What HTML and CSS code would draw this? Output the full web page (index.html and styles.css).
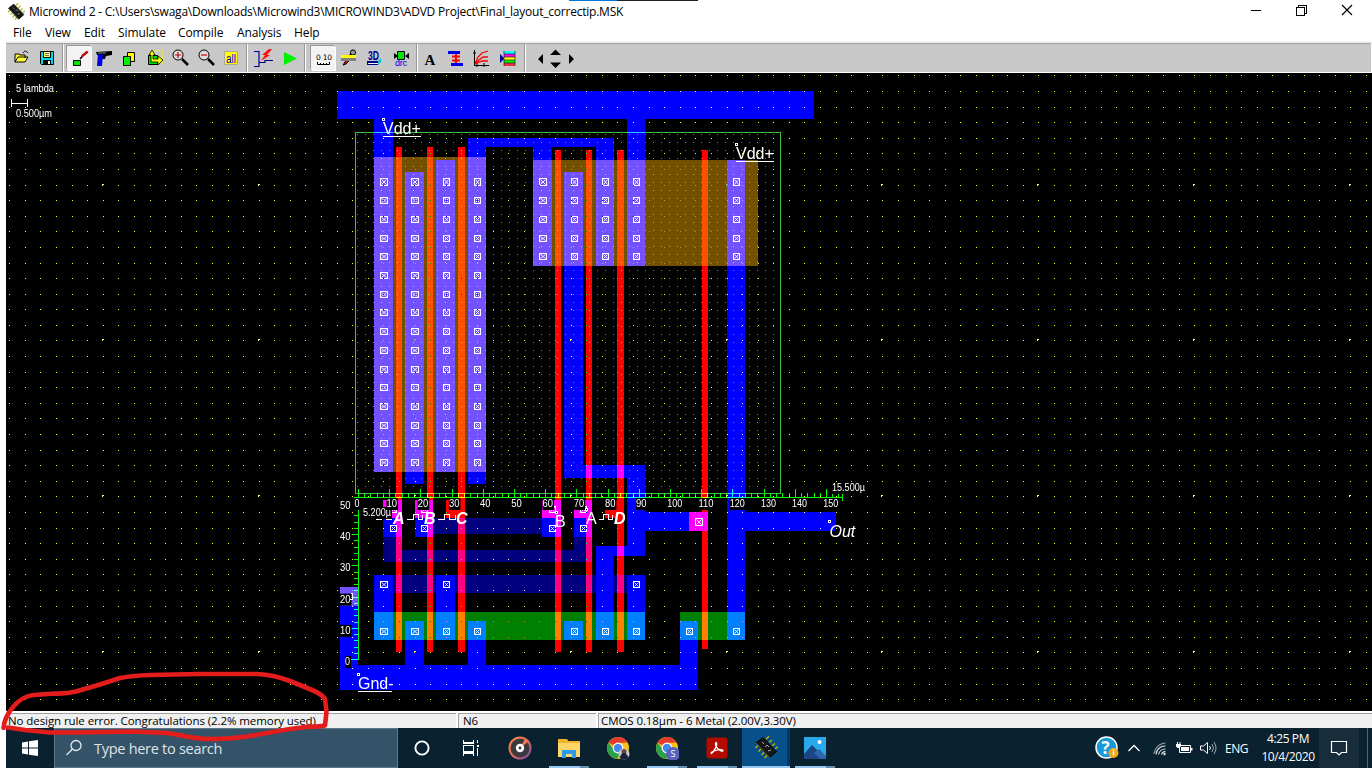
FILE: index.html
```html
<!DOCTYPE html>
<html lang="en">
<head>
<meta charset="utf-8">
<title>Microwind 2</title>
<link rel="stylesheet" href="styles.css">
</head>
<body>
<svg class="defs" width="0" height="0">
  <defs>
    <symbol id="chip" viewBox="0 0 24 24">
      <path d="M4.500 9l-3 3M7.500 12.500l-3 3M10.500 16l-3 3M13.500 19l-3 3M12 3l3-2.500M15 6.500l3-2.500M18 10l3-2.500M21 13l3-2.500" stroke="#b4b400" stroke-width="1.500"/>
      <path d="M2 7L9 1.500 22.500 15.500 15.500 21.500z" fill="#161616" stroke="#000"/>
      <path d="M2 7L15.500 21.500" stroke="#66663a" stroke-width="1"/>
      <path d="M8 6l2 2M11 11l2-2 2 2M14 15l3-1" stroke="#aaa" stroke-width="1" fill="none"/>
    </symbol>
    <symbol id="chrome" viewBox="0 0 24 24">
      <circle cx="12" cy="12" r="11" fill="#fbc116"/>
      <path d="M12 12L2.500 6.500A11 11 0 0 1 21.500 6.500L12 7z" fill="#e33b2e"/>
      <path d="M2.500 6.500A11 11 0 0 0 11 23L16 14 12 12 8 14z" fill="#2ca14c"/>
      <circle cx="12" cy="12" r="5.400" fill="#fff"/><circle cx="12" cy="12" r="4.200" fill="#4688f1"/>
    </symbol>
  </defs>
</svg>
<div class="window">
  <header class="titlebar">
    <svg class="appicon" viewBox="0 0 24 24"><use href="#chip"/></svg>
    <span class="title">Microwind 2 - C:\Users\swaga\Downloads\Microwind3\MICROWIND3\ADVD Project\Final_layout_correctip.MSK</span>
    <svg class="controls" viewBox="0 0 110 20" fill="none" stroke="#000" shape-rendering="crispEdges">
      <path d="M1 8.500h10M46.500 5.500h8v8h-8zM48.500 5V3.500h8v8H55"/>
      <path d="M92 3l10 10M102 3l-10 10" shape-rendering="auto" stroke-width="1.200"/>
    </svg>
  </header>
  <nav class="menubar"><span class="m1">File</span><span class="m2">View</span><span class="m3">Edit</span><span class="m4">Simulate</span><span class="m5">Compile</span><span class="m6">Analysis</span><span class="m7">Help</span></nav>
  <div class="toolbar">
    <div class="group g1">
      <svg class="tool" viewBox="0 0 24 24"><path d="M6 16V8h4l1 1h5v3M6 16l3-5h10l-3 5z" fill="#ffff40" stroke="#000"/><path d="M14 7c2-3 3-2 5 0" fill="none" stroke="#000"/></svg>
      <svg class="tool" viewBox="0 0 24 24"><path d="M5.500 5.500h13v13h-12l-1-1z" fill="#00d8e8" stroke="#000"/><path d="M8.500 5.500h7v6h-7z" fill="#ffff60" stroke="#000"/><path d="M10 7.500h4M10 9.500h4" stroke="#777"/><path d="M8 14h8v4H8z" fill="#000"/><path d="M13 15h2v3h-2z" fill="#fff"/></svg>
    </div>
    <div class="group g2">
      <svg class="tool pressed" viewBox="0 0 24 24"><path d="M6.500 14.500h7v5h-7z" fill="#00e800" stroke="#000"/><path d="M14 12l1-3 5-4 1 1.500-5 4z" fill="#e80000" stroke="#900" stroke-width=".8"/><path d="M13 13l2-2" stroke="#000" stroke-width="1.500"/></svg>
      <svg class="tool" viewBox="0 0 24 24"><path d="M4 6l16-1v4l-6 1-1 3h-3l-1-3-4-1z" fill="#000"/><path d="M6 8l5 1-1 11H5z" fill="#0000e0"/><path d="M6 7h8" stroke="#888"/></svg>
      <svg class="tool" viewBox="0 0 24 24"><path d="M9.500 6.500h7v9h-7z" fill="#ffff00" stroke="#000"/><path d="M5.500 10.500h7v9h-7z" fill="#00f000" stroke="#000"/></svg>
      <svg class="tool" viewBox="0 0 24 24"><path d="M7.500 4.500h12v13" fill="none" stroke="#ff0" stroke-dasharray="1 1"/><path d="M5.500 9.500h9v9h-9z" fill="#00dc00" stroke="#000"/><path d="M6 9l3-5 3 5h-2v4h5v-3l5 4-5 5v-3H8V9z" fill="#ffff00" stroke="#000" stroke-width=".8"/></svg>
      <svg class="tool" viewBox="0 0 24 24"><path d="M14 13l6 6" stroke="#000" stroke-width="2.500"/><circle cx="10" cy="9" r="5" fill="#ddd" stroke="#000"/><path d="M7 9h6M10 6v6" stroke="#d00000" stroke-width="1.200"/></svg>
      <svg class="tool" viewBox="0 0 24 24"><path d="M14 13l6 6" stroke="#000" stroke-width="2.500"/><circle cx="10" cy="9" r="5" fill="#ddd" stroke="#000"/><path d="M7 9h6" stroke="#d00000" stroke-width="1.200"/></svg>
      <svg class="tool" viewBox="0 0 24 24"><path d="M5.500 5.500h13v13h-13z" fill="#ffff00" stroke="#aaa890"/><text class="all" x="7" y="17" textLength="10" lengthAdjust="spacingAndGlyphs">all</text></svg>
    </div>
    <div class="group g3">
      <svg class="tool" viewBox="0 0 24 24"><path d="M3 5.500h5v15H3M8 16.500h6v-2h8" fill="none" stroke="#000090" stroke-width="1.200"/><path d="M18 3l-7 6h3l-4 6 9-6h-3l5-6z" fill="#ff1010"/></svg>
      <svg class="tool" viewBox="0 0 24 24"><path d="M6 6v13l13-6.500z" fill="#00f000"/></svg>
    </div>
    <div class="group g4">
      <svg class="tool pressed" viewBox="0 0 24 24"><text class="tiny" x="5" y="14" textLength="16">0 10</text><path d="M6.500 16v2.500h12V16M9.500 17v1M12.500 17v1M15.500 17v1" fill="none" stroke="#000"/></svg>
      <svg class="tool" viewBox="0 0 24 24"><path d="M6 19l6-9 4-6 2 3-2 4-7 7z" fill="#e00000" stroke="#000"/><circle cx="16" cy="6.500" r="2.600" fill="#999" stroke="#000"/><path d="M4 9h15v3H4z" fill="#ffff00"/><path d="M4 12h15v3H4z" fill="#808080"/></svg>
      <svg class="tool" viewBox="0 0 24 24"><text class="three" x="5" y="14" textLength="11" lengthAdjust="spacingAndGlyphs">3D</text><path d="M5 15h10l3-3v4l-3 3H5z" fill="#00c8d8"/><path d="M4 15h11v4H4z" fill="#000080"/><path d="M5 17.500h10" stroke="#eee"/></svg>
      <svg class="tool" viewBox="0 0 24 24"><path d="M8.500 5.500h7v8h-7z" fill="#00e800" stroke="#000"/><path d="M5 7v6l4-3zM20 7v6l-4-3z" fill="#000"/><text class="drc" x="6" y="20" textLength="12">drc</text></svg>
    </div>
    <div class="group g5">
      <svg class="tool" viewBox="0 0 24 24"><text class="letter" x="6.500" y="18.500">A</text></svg>
      <svg class="tool" viewBox="0 0 24 24"><path d="M4 5h12v3H4zM7 17h12v3H7z" fill="#0000e8"/><path d="M12 8v9M8 10.500h8M8 14.500h8" stroke="#f00" stroke-width="2"/></svg>
      <svg class="tool" viewBox="0 0 24 24"><path d="M4.500 4v15.500H19M3 7h3M7 17v4M14 17v4" fill="none" stroke="#000"/><path d="M5 18l3-7 4-4 6-2M5 18l4-4 4-3h5M5 18l7-3h6" fill="none" stroke="#f00" stroke-width="1.300"/></svg>
      <svg class="tool" viewBox="0 0 24 24"><path d="M4 8v9l4.500-4.500z" fill="#000090"/><path d="M8 5h11v3H8z" fill="#0ff"/><path d="M8 8h11v3H8z" fill="#f0f"/><path d="M8 11h11v3H8z" fill="#ff0"/><path d="M8 14h11v3H8z" fill="#0e0"/><path d="M8 17h11v3H8z" fill="#f03040"/><path d="M8 5v15M19 5v15M8 8h11M8 11h11M8 14h11M8 17h11" stroke="#222" stroke-width=".7"/></svg>
    </div>
    <svg class="arrows" viewBox="0 0 44 24"><path d="M9 8v10l-5-5zM16 9h11l-5.500-5.500zM16 16.500h11L21.500 22zM35 8v10l5-5z" fill="#000"/></svg>
  </div>
  <main class="stage"><svg id="layout" viewBox="6 73 1366 638" width="1366" height="638"></svg></main>
  <footer class="statusbar"><span class="cell c1"><span class="s1">No design rule error. Congratulations (2.2% memory used)</span></span><span class="cell c2"><span>N6</span></span><span class="cell c3"><span class="s3">CMOS 0.18µm - 6 Metal (2.00V,3.30V)</span></span></footer>
</div>
<div class="taskbar">
  <div class="start"><svg width="18" height="18" viewBox="0 0 18 18" fill="#fff"><path d="M1 3.500l6-1v6H1zM8 2.300L17 1v7.500H8zM1 9.500h6v6l-6-1zM8 9.500h9V17l-9-1.300z"/></svg></div>
  <div class="search"><svg width="18" height="18" viewBox="0 0 18 18" fill="none" stroke="#e4eaee" stroke-width="1.300"><circle cx="11" cy="6.500" r="5"/><path d="M7.300 10.200L1.500 16"/></svg><span>Type here to search</span></div>
  <div class="apps">
    <div class="app"><svg viewBox="0 0 24 24"><circle cx="12" cy="12" r="6.600" fill="none" stroke="#fff" stroke-width="1.900"/></svg></div>
    <div class="app"><svg viewBox="0 0 24 24" fill="none" stroke="#fff" stroke-width="1.100" shape-rendering="crispEdges"><path d="M4.500 4v3h10V4M4.500 9.500h10v6h-10zM4.500 20v-3h10v3M18.500 4v3M18.500 12v7.500"/><path d="M17.500 9.500h2" stroke-width="2"/></svg></div>
    <div class="app"><svg viewBox="0 0 24 24"><defs><linearGradient id="gr" x1="0" y1="0" x2="1" y2="1"><stop offset="0" stop-color="#ff8a4a"/><stop offset=".5" stop-color="#e0705a"/><stop offset="1" stop-color="#7044b8"/></linearGradient></defs><circle cx="12" cy="12" r="11.500" fill="url(#gr)"/><circle cx="12" cy="12" r="9.500" fill="#3a3a40"/><path d="M12 12L20 6A10 10 0 0 0 17 3z" fill="#f47a50"/><circle cx="12" cy="12" r="4.200" fill="#fff"/><circle cx="12" cy="12" r="1.400" fill="#333"/></svg></div>
    <div class="app open"><svg viewBox="0 0 24 24"><path d="M1 3h9l1.500 2H23v16H1z" fill="#f1b42c"/><path d="M1 7h22v14H1z" fill="#ffd768"/><path d="M5 14h14v8h-4v-4H9v4H5z" fill="#2e9be6"/></svg></div>
    <div class="app"><svg viewBox="0 0 24 24"><use href="#chrome"/><circle cx="18" cy="18" r="5.500" fill="#c8c9c8"/><circle cx="18" cy="15.500" r="2.500" fill="#6c4a38"/><path d="M13.500 21l3-4h3l3 4-2 2.500h-5z" fill="#15243c"/></svg></div>
    <div class="app open"><svg viewBox="0 0 24 24"><use href="#chrome"/><circle cx="18" cy="18" r="7" fill="#5762bd"/><text class="badge" x="15.500" y="21">S</text></svg></div>
    <div class="app open"><svg viewBox="0 0 24 24"><rect x="1.500" y="1.500" width="21" height="21" rx="3" fill="#b30b00"/><path d="M6.500 17.500C4 16 16 12 18 14.500 18 17 10 12 10.500 7.500 11.500 4 14 10 6.500 17.500z" fill="none" stroke="#fff" stroke-width="1.300"/></svg></div>
    <div class="app open active"><svg viewBox="0 0 24 24"><use href="#chip"/></svg></div>
    <div class="app open"><svg viewBox="0 0 24 24"><path d="M1 1h22v22H1z" fill="#29a9ea"/><path d="M1 18l8-9 14 14H1z" fill="#1b4785"/><path d="M11 17l5-4 7 7v3h-6z" fill="#2d66ad"/><circle cx="16.500" cy="6" r="2" fill="#fff"/></svg></div>
  </div>
  <div class="tray">
    <svg class="help" viewBox="0 0 24 24"><circle cx="11.500" cy="11.500" r="10.500" fill="#179bd8" stroke="#fff" stroke-width="1.500"/><text class="q" x="6.500" y="17.500">?</text><circle cx="18.500" cy="17" r="5" fill="#f0a81c"/><path d="M18.500 15.500v4M18.500 13v1.400" stroke="#fff" stroke-width="1.500"/></svg>
    <svg class="chev" viewBox="0 0 14 24" fill="none" stroke="#fff" stroke-width="1.300"><path d="M1.500 15l5.500-5.500 5.500 5.500"/></svg>
    <svg class="wifi" viewBox="0 0 16 24" fill="none" stroke="#e0e5e8" stroke-width="1.100"><path d="M2 18A12 12 0 0 1 13.500 7" opacity=".6"/><path d="M4 18.500A9 9 0 0 1 13.500 10M6.500 18.500A7 7 0 0 1 13.500 13M9.500 18.500A4 4 0 0 1 13.500 15.500"/><path d="M11.500 18h2" stroke-width="2.500"/></svg>
    <svg class="batt" viewBox="0 0 18 24"><path d="M4.500 9.500h11v7h-11z" fill="none" stroke="#fff"/><path d="M6 11h8v4H6zM16 12h1.500v2.500H16zM1 8h5v2L4.500 12h-2L1 10.500zM2 6h1v2H2zM4.500 6h1v2h-1z" fill="#fff"/></svg>
    <svg class="vol" viewBox="0 0 18 24" fill="none" stroke="#fff"><path d="M1.500 10h3l4-3.500v11L4.500 14h-3zM10.500 10q2 2 0 4"/><path d="M13 8q3 4 0 8M15 6q4 6 0 12" opacity=".6"/></svg>
    <span class="lang">ENG</span>
    <div class="clock"><span class="time">4:25 PM</span><span class="date">10/4/2020</span></div>
    <div class="notify"><svg width="18" height="18" viewBox="0 0 18 18" fill="none" stroke="#fff" stroke-width="1.200"><path d="M1.500 2.500h15v11h-5L9 16l-2.500-2.500h-5z"/></svg></div>
    <div class="peek"></div>
  </div>
</div>
<div class="topstrip"></div>
<svg class="marker" viewBox="0 660 340 90" width="340" height="90" fill="none" stroke="#e51c1c" stroke-width="4.600" stroke-linecap="round" stroke-linejoin="round">
  <path d="M3.500 728C4 720 8 713 13 707Q22 696 34 695L55 693.500Q66 694 76 691.500L100 684.500 120 678Q133 675.500 150 675L200 674H257Q275 675 290 681L312 690Q322 694 325 699L326.500 712 325 725.500Q318 727 310 726.500L290 729 247 736.500Q230 739 213 739Q197 739 187 736.500L167 733 133 731.500 73 732.500H50L25 730 8 727.500"/>
</svg>
<script src="layout.js"></script>
</body>
</html>
```
FILE: styles.css
```css
* { box-sizing: border-box; }
body { margin: 0; width: 1372px; height: 768px; overflow: hidden; background: #fff; font-family: "Open Sans", "Noto Sans", sans-serif; font-size: 12px; color: #000; position: relative; }
.defs { position: absolute; }
.window { margin-left: 6px; display: flex; flex-direction: column; height: 728px; }
.titlebar { height: 23px; display: flex; align-items: center; flex: none; }
.appicon { width: 18px; height: 18px; margin-left: 1px; }
.title { margin-left: 4px; white-space: nowrap; letter-spacing: -0.22px; }
.controls { width: 110px; height: 20px; margin-left: auto; margin-right: 12px; }
.menubar { height: 20px; display: flex; align-items: center; flex: none; letter-spacing: -0.1px; border-bottom: 2px solid #f0f0f0; padding-top: 1px; }
.menubar span { flex: none; }
.m1 { width: 32px; margin-left: 7px; }
.m2 { width: 39px; }
.m3 { width: 34px; }
.m4 { width: 60px; }
.m5 { width: 59px; }
.m6 { width: 57px; }
.toolbar { height: 30px; flex: none; background: #c8c8c8; border-top: 1px solid #a0a0a0; border-bottom: 1px solid #fff; display: flex; align-items: center; margin-right: 1px; }
.group { display: flex; height: 28px; align-items: center; border-right: 1px solid #999; box-shadow: 1px 0 #fff; justify-content: space-around; flex: none; }
.g1 { width: 57px; padding: 0 2px; }
.g2 { width: 184px; padding: 0 2px 0 3px; }
.g3 { width: 58px; padding: 0 1px 0 3px; }
.g4 { width: 112px; padding: 0 2px 0 5px; }
.g5 { width: 108px; padding: 0 3px 0 0; }
.tool { width: 24px; height: 24px; flex: none; }
.pressed { background: #f3f3f3; box-shadow: -1px -1px #999, 1px 1px #fff; }
.arrows { width: 44px; height: 24px; margin-left: 9px; }
.all { font: 12px "Liberation Sans", sans-serif; fill: #0000d8; }
.tiny { font: 7.500px "DejaVu Sans", sans-serif; }
.three { font: bold 12px "Liberation Sans", sans-serif; fill: #000090; }
.drc { font: 9px "Liberation Sans", sans-serif; fill: #0000e0; }
.letter { font: bold 15px "Liberation Serif", serif; }
.stage { height: 638px; flex: none; background: #000; }
.stage svg { display: block; isolation: isolate; }
.stage text { font-family: "Liberation Sans", Arial, sans-serif; fill: #fff; }
.small { font-size: 10px; }
.big { font-size: 16px; }
.bi { font-weight: bold; font-style: italic; }
.it { font-style: italic; }
.layer { mix-blend-mode: lighten; }
.welldots, .ruler { mix-blend-mode: screen; }
.griddots { mix-blend-mode: difference; }
.statusbar { height: 17px; flex: none; display: flex; gap: 2px; background: #fff; padding-top: 2px; }
.cell { display: flex; align-items: center; background: #f0f0f0; border-top: 1px solid #a0a0a0; border-left: 1px solid #a0a0a0; height: 15px; padding: 0 0 1px 4px; white-space: nowrap; font-size: 11.500px; line-height: 13px; letter-spacing: -0.08px; }
.c1 { width: 450px; padding-left: 2px; border-left: 0; }
.c2 { width: 138px; }
.c3 { flex: 1; padding-left: 2px; }
.taskbar { margin-left: 6px; height: 40px; background: #0a2130; display: flex; color: #fff; }
.start { width: 48px; display: flex; align-items: center; justify-content: center; flex: none; }
.search { width: 344px; flex: none; display: flex; align-items: center; background: #345268; border: 1px solid #5d788b; padding-left: 10px; font-size: 14.500px; color: #dfe5e9; letter-spacing: -0.28px; }
.search span { margin-left: 11px; }
.apps { display: flex; gap: 1.100px; flex: none; }
.app { width: 48px; height: 40px; display: flex; align-items: center; justify-content: center; position: relative; }
.app svg { width: 24px; height: 24px; }
.open::after { content: ""; position: absolute; left: 4px; bottom: 0; width: 40px; height: 2px; background: linear-gradient(90deg, #98c8f4 0 31px, #6890ae 31px); }
.active { background: linear-gradient(90deg, #07508a 0 45px, #033a68 45px); }
.active::after { left: 0; width: 48px; background: #98c8f4; }
.badge { font: 9px "Open Sans", sans-serif; fill: #fff; }
.tray { margin-left: auto; display: flex; align-items: center; flex: none; }
.help { width: 24px; height: 24px; }
.chev { width: 14px; height: 24px; margin-left: 8px; }
.wifi { width: 16px; height: 24px; margin-left: 11px; }
.batt { width: 18px; height: 24px; margin-left: 7px; }
.vol { width: 18px; height: 24px; margin-left: 6px; }
.q { font: bold 17px "Open Sans", sans-serif; fill: #fff; }
.lang { width: 26px; margin-left: 8px; letter-spacing: -0.5px; }
.clock { width: 58px; margin-left: 8px; display: flex; flex-direction: column; align-items: center; line-height: 18px; letter-spacing: -0.4px; white-space: nowrap; }
.notify { width: 40px; height: 40px; background: #172d3c; margin-left: 2px; display: flex; align-items: center; justify-content: center; }
.peek { width: 5px; height: 40px; margin-left: 8px; border-left: 1px solid #53636e; }
.topstrip { position: absolute; left: 569px; top: 0; width: 129px; height: 1px; background: linear-gradient(90deg, #0078d7 0 48px, #222 48px); }
.marker { position: absolute; left: 0; top: 660px; }
```
FILE: layout.js
```js
const svg = document.getElementById('layout');
const BLUE = '#0000ff', RED = '#ff0000', PDIFF = '#735100', NDIFF = '#008000', METAL2 = '#000080';

function add(tag, attrs, text) {
  const el = document.createElementNS('http://www.w3.org/2000/svg', tag);
  for (const k in attrs) el.setAttribute(k, attrs[k]);
  if (text) el.textContent = text;
  svg.appendChild(el);
  return el;
}
// Each mask layer is one path made of [x1, y1, x2, y2] boxes.
function boxes(color, list) {
  const d = list.map(([a, b, c, e]) => `M${a} ${b}H${c}V${e}H${a}z`).join('');
  add('path', { d, fill: color, class: 'layer', 'shape-rendering': 'crispEdges' });
}

boxes(PDIFF, [[374, 157, 486, 472], [533, 160, 758, 266], [340, 587, 358, 606]]);
boxes(NDIFF, [[374, 612, 645, 640], [680, 612, 745, 640]]);
boxes(METAL2, [[415, 518, 561, 534], [383, 537, 402, 562], [383, 550, 592, 562], [574, 537, 592, 562], [374, 575, 645, 593]]);
boxes(BLUE, [
  [337, 91, 814, 119], [374, 119, 393, 472], [405, 172, 424, 484], [436, 160, 455, 472],
  [468, 138, 486, 484], [468, 138, 614, 147], [533, 138, 552, 266], [564, 172, 583, 478],
  [596, 138, 614, 266], [627, 119, 645, 266], [727, 160, 745, 640], [564, 465, 645, 478],
  [627, 465, 645, 556], [596, 546, 645, 556], [596, 546, 614, 640], [645, 512, 708, 531],
  [727, 512, 836, 531], [383, 500, 402, 537], [415, 500, 433, 537], [542, 500, 561, 537],
  [574, 500, 592, 537], [374, 575, 393, 640], [405, 621, 424, 690], [436, 575, 455, 640],
  [468, 621, 486, 690], [564, 621, 583, 640], [627, 575, 645, 640], [680, 621, 698, 690],
  [340, 665, 698, 690], [340, 587, 358, 690]
]);
boxes(RED, [
  [396, 147, 402, 652], [427, 147, 433, 652], [458, 147, 465, 652], [555, 150, 561, 652],
  [586, 150, 592, 652], [617, 150, 624, 652], [702, 150, 708, 649], [689, 512, 708, 531],
  [383, 500, 402, 518], [415, 500, 433, 518], [446, 500, 465, 518], [542, 500, 561, 518],
  [574, 500, 592, 518], [605, 500, 624, 518]
]);

// Contacts
function contact(x, y, w, h) {
  add('path', { d: `M${x + .5} ${y + .5}h${w - 1}v${h - 1}h${1 - w}z`, fill: 'none', stroke: '#fff', 'shape-rendering': 'crispEdges' });
  add('path', { d: `M${x + 1.5} ${y + 1.5}L${x + w - 1.5} ${y + h - 1.5}M${x + w - 1.5} ${y + 1.5}L${x + 1.5} ${y + h - 1.5}`, stroke: '#fff', 'stroke-width': .9 });
}
const leftCols = [[380, 8], [411, 8], [443, 7], [474, 7]];
const rightCols = [[539, 8], [571, 7], [602, 7], [633, 7], [733, 7]];
for (let k = 0; k < 16; k++) {
  const h = k ? 7 : 8, y = Math.round(182 + 18.71 * k - h / 2);
  for (const [x, w] of k < 5 ? leftCols.concat(rightCols) : leftCols) contact(x, y, w, h);
}
for (const [x, w] of leftCols.concat(rightCols.slice(1), [[686, 7]])) contact(x, 628, w, 7);
for (const x of [380, 443, 633]) contact(x, 581, x === 380 ? 8 : 7, 7);
for (const x of [390, 421, 549, 580]) { contact(x, 525, 7, 7); contact(x, 506, 7, 7); }
contact(695, 518, 8, 8);

// Grids: a 5-lambda dot raster, and a finer raster inside the n-well
let dots = '', wide = '', well = '';
for (let n = 0; n < 88; n++) for (let m = 0; m < 41; m++) {
  const x = Math.floor(9.7 + 15.594 * n), y = Math.floor(75.9 + 15.594 * m);
  if (n % 10 === 6 && m % 10 === 7) wide += `M${x - 1} ${y - 1}h2v1h-1v1h-1z`;
  else dots += `M${x} ${y}h1v1h-1z`;
}
for (let x = 357; x < 780; x += 8) for (let y = 134; y < 493; y += 8) well += `M${x} ${y}h1v1h-1z`;
add('path', { d: well, fill: '#46a046', class: 'welldots', 'shape-rendering': 'crispEdges' });
add('path', { d: dots, fill: '#ffff00', class: 'griddots', 'shape-rendering': 'crispEdges' });
add('path', { d: wide, fill: '#ffff80', class: 'griddots', 'shape-rendering': 'crispEdges' });
add('path', { d: 'M355.5 132.5H780.5V493.5H355.5z', fill: 'none', stroke: '#40c040', class: 'ruler', 'shape-rendering': 'crispEdges' });

// Rulers
let r = 'M354 497.5H843M842.5 494v7M358.5 510V660';
for (let i = 0; i <= 154; i += 2) r += `M${Math.round(358 + i * 3.12) + .5} ${i % 10 ? 493 : 489}V497`;
for (let i = 0; i <= 46; i += 2) r += `M${i % 10 ? 354 : 351} ${Math.round(659 - i * 3.12) + .5}H358`;
add('path', { d: r, fill: 'none', stroke: '#00ff00', class: 'ruler', 'shape-rendering': 'crispEdges' });

function label(x, y, text, w) {
  add('rect', { x: x, y: y - 9, width: w + 1, height: 12, fill: '#000' });
  add('text', { x, y, class: 'small', textLength: w, lengthAdjust: 'spacingAndGlyphs' }, text);
}
label(363, 516, '5.200µ', 28);
for (let i = 0; i <= 15; i++) label(i ? 355.3 + i * 31.2 : 354.5, 507, String(i * 10), i > 9 ? 15 : i ? 10.5 : 5);
for (let i = 0; i <= 5; i++) label(i ? 340 : 345, 665 - i * 31.2, String(i * 10), i ? 10.5 : 5);
label(832, 491, '15.500µ', 33);
add('text', { x: 16, y: 92, class: 'small', textLength: 38, lengthAdjust: 'spacingAndGlyphs' }, '5 lambda');
add('text', { x: 16, y: 117, class: 'small', textLength: 36, lengthAdjust: 'spacingAndGlyphs' }, '0.500µm');
add('path', { d: 'M11.500 99v8M27.500 99v8M11 103.500h17', stroke: '#fff', 'shape-rendering': 'crispEdges' });

// Signals
const signal = (x, y, t, c = '') => add('text', { x, y, class: 'big ' + c }, t);
signal(383, 134, 'Vdd+');
signal(736, 159, 'Vdd+');
signal(358, 689, 'Gnd-');
signal(829.5, 537, 'Out', 'it');
signal(393, 524, 'A', 'bi');
signal(424, 524, 'B', 'bi');
signal(456, 524, 'C', 'bi');
signal(614, 524, 'D', 'bi');
signal(555, 527, 'B');
signal(586, 524, 'A');
add('path', { d: 'M383 136.500h38M736 161.500h38M358 691.500h34M376 519.500h6M386 519.500h6M407 519.500h6v-5h5v5h4v-5M438 519.500h6v-5h5v5h6v-5M599 519.500h4v-5h5v5h4v-5', stroke: '#fff', fill: 'none', 'shape-rendering': 'crispEdges' });
for (const [x, y] of [[382, 118], [735, 143], [357, 673], [828, 520], [555, 511], [585, 508]])
  add('rect', { x: x + .5, y: y + .5, width: 2, height: 2, fill: '#000', stroke: '#fff', 'shape-rendering': 'crispEdges' });
add('path', { d: 'M352.500 593v6M351 593.500h2M350 599.500h3', stroke: '#fff', 'shape-rendering': 'crispEdges' });
```
